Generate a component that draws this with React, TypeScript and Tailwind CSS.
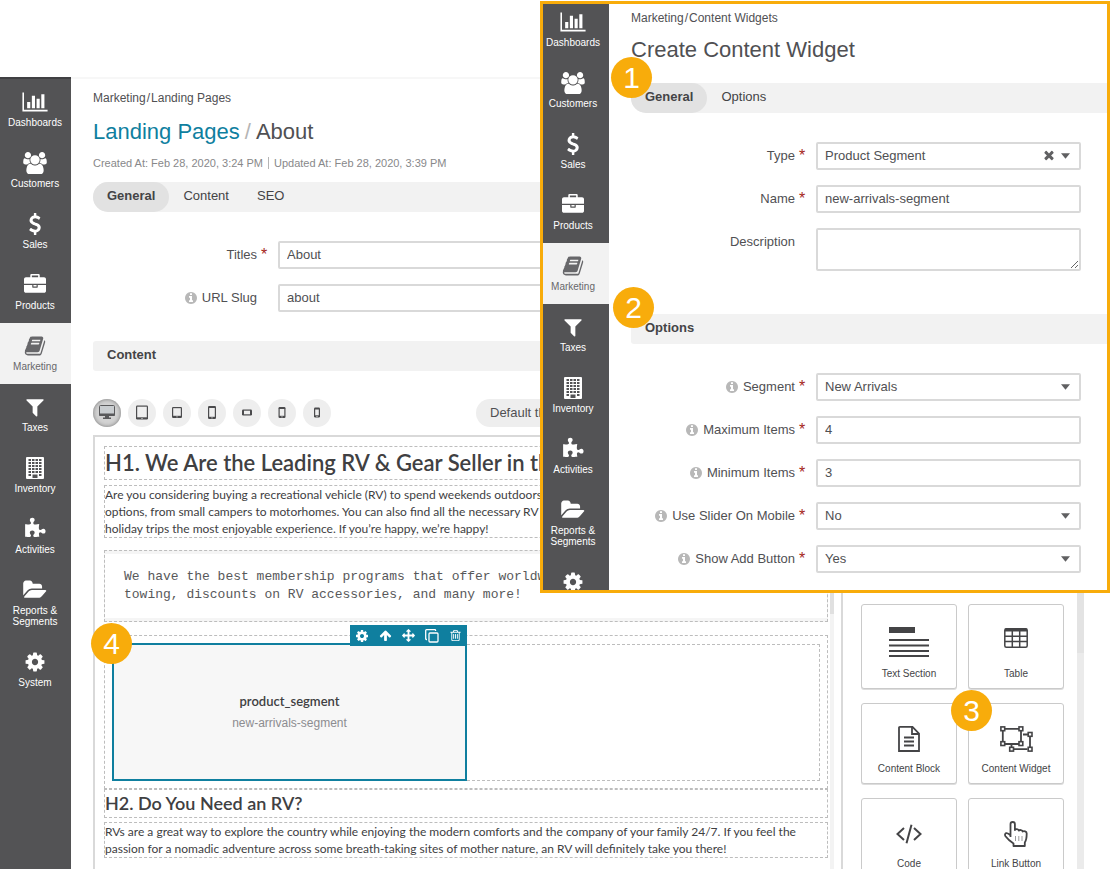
import React from "react";

type IconDef = { w: number; d: string };

const ICONS: Record<string, IconDef> = {
  chart: { w: 2048, d: "M640 896v512h-256v-512h256zm384-512v1024h-256v-1024h256zm1024 1152v128h-2048v-1536h128v1408h1920zm-640-896v768h-256v-768h256zm384-384v1152h-256v-1152h256z" },
  users: { w: 2048, d: "M657 896q-162 5-265 128h-134q-82 0-138-40.5t-56-118.5q0-353 124-353 6 0 43.5 21t97.5 42.5 119 21.5q67 0 133-23-5 37-5 66 0 139 81 256zm1071 637q0 120-73 189.5t-194 69.5h-874q-121 0-194-69.5t-73-189.5q0-53 3.5-103.5t14-109 26.5-108.5 43-97.5 62-81 85.5-53.5 111.5-20q10 0 43 21.5t73 48 107 48 135 21.5 135-21.5 107-48 73-48 43-21.5q61 0 111.5 20t85.500 53.5 62 81 43 97.5 26.500 108.5 14 109 3.500 103.5zm-1024-1277q0 106-75 181t-181 75-181-75-75-181 75-181 181-75 181 75 75 181zm704 384q0 159-112.500 271.5t-271.500 112.500-271.500-112.500-112.500-271.500 112.500-271.500 271.500-112.500 271.500 112.500 112.500 271.500zm576 225q0 78-56 118.500t-138 40.500h-134q-103-123-265-128 81-117 81-256 0-29-5-66 66 23 133 23 59 0 119-21.500t97.500-42.500 43.500-21q124 0 124 353zm-128-609q0 106-75 181t-181 75-181-75-75-181 75-181 181-75 181 75 75 181z" },
  dollar: { w: 1792, d: "M1362 1185q0 153-99.500 263.500t-258.500 136.500v175q0 14-9 23t-23 9h-135q-13 0-22.500-9.500t-9.500-22.500v-175q-66-9-127.500-31t-101.500-44.500-74-48-46.500-37.500-17.500-18q-17-21-2-41l103-135q7-10 23-12 15-2 24 9l2 2q113 99 243 125 37 8 74 8 81 0 142.500-43t61.500-122q0-28-15-53t-33.500-42-58.500-37.500-66-32-80-32.500q-39-16-61.500-25t-61.500-26.500-62.500-31-56.500-35.500-53.500-42.500-43.500-49-35.500-58-21-66.500-8.500-78q0-138 98-242t255-134v-180q0-13 9.500-22.500t22.500-9.500h135q14 0 23 9t9 23v176q57 6 110.500 23t87 33.500 63.500 37.500 39 29 15 14q17 18 5 38l-81 146q-8 15-23 16-14 3-27-7-3-3-14.500-12t-39-26.500-58.500-32-74.500-26-85.500-11.500q-95 0-155 43t-60 111q0 26 8.500 48t29.500 41.500 39.500 33 56 31 60.500 27 70 27.500q53 20 81 31.500t76 35 75.500 42.500 62 50 53 63.500 31.500 76.500 13 94z" },
  briefcase: { w: 1792, d: "M640 256h512v-128h-512v128zm1152 640v480q0 66-47 113t-113 47h-1472q-66 0-113-47t-47-113v-480h672v160q0 26 19 45t45 19h320q26 0 45-19t19-45v-160h672zm-768 0v128h-256v-128h256zm768-480v384h-1792v-384q0-66 47-113t113-47h352v-160q0-40 28-68t68-28h576q40 0 68 28t28 68v160h352q66 0 113 47t47 113z" },
  book: { w: 1792, d: "M1703 478q40 57 18 129l-275 906q-19 64-76.500 107.500t-122.500 43.500h-923q-77 0-148.500-53.500t-99.500-131.500q-24-67-2-127 0-4 3-27t4-37q1-8-3-21.500t-3-19.500q2-11 8-21t16.500-23.500 16.500-23.500q23-38 45-91.500t30-91.500q3-10 .5-30t-.5-28q3-11 17-28t17-23q21-36 42-92t25-90q1-9-2.500-32t.5-28q4-13 22-30.500t22-22.500q19-26 42.500-84.500t27.500-96.500q1-8-3-25.500t-2-26.500q2-8 9-18t18-23 17-21q8-12 16.500-30.500t15-35 16-36 19.500-32 26.500-23.500 36-11.500 47.500 5.500l-1 3q38-9 51-9h761q74 0 114 56t18 130l-274 906q-36 119-71.500 153.500t-128.500 34.500h-869q-27 0-38 15-11 16-1 43 24 70 144 70h923q29 0 56-15.500t35-41.500l300-987q7-22 5-57 38 15 59 43zm-1064 2q-4 13 2 22.500t20 9.500h608q13 0 25.500-9.500t16.500-22.500l21-64q4-13-2-22.500t-20-9.500h-608q-13 0-25.500 9.500t-16.500 22.500zm-83 256q-4 13 2 22.500t20 9.500h608q13 0 25.500-9.500t16.500-22.500l21-64q4-13-2-22.500t-20-9.500h-608q-13 0-25.500 9.500t-16.500 22.500z" },
  filter: { w: 1792, d: "M1595 295q17 41-14 70l-493 493v742q0 42-39 59-13 5-25 5-27 0-45-19l-256-256q-19-19-19-45v-486l-493-493q-31-29-14-70 17-39 59-39h1280q42 0 59 39z" },
  puzzle: { w: 1792, d: "M1755 1083q0 81-44.500 135t-123.500 54q-41 0-77.500-17.500t-59-38-56.500-38-71-17.500q-110 0-110 124 0 39 16 115t15 115v5q-22 0-33 1-34 3-97.500 11.500t-115.500 13.500-98 5q-61 0-103-26.500t-42-83.500q0-37 17.500-71t38-56.500 38-59 17.500-77.500q0-79-54-123.500t-135-44.500q-84 0-143 45.500t-59 127.500q0 43 15 83t33.500 64.500 33.500 53 15 50.500q0 45-46 89-37 35-117 35-95 0-245-24-9-2-27.500-4t-27.500-4l-13-2q-1 0-3-1-2 0-2-1v-1024q2 1 17.500 3.500t34 5 21.500 3.500q150 24 245 24 80 0 117-35 46-44 46-89 0-22-15-50.500t-33.500-53-33.500-64.500-15-83q0-82 59-127.500t144-45.500q80 0 134 44.500t54 123.500q0 41-17.500 77.500t-38 59-38 56.500-17.500 71q0 57 42 83.500t103 26.500q64 0 180-15t163-17v2q-1 2-3.500 17.500t-5 34-3.500 21.500q-24 150-24 245 0 80 35 117 44 46 89 46 22 0 50.500-15t53-33.500 64.500-33.500 83-15q82 0 127.500 59t45.500 143z" },
  folder: { w: 1792, d: "M1815 952q0 31-31 66l-336 396q-43 51-120.500 86.500t-143.500 35.500h-1088q-34 0-60.500-13t-26.500-43q0-31 31-66l336-396q43-51 120.500-86.500t143.500-35.500h1088q34 0 60.500 13t26.500 43zm-343-344v160h-832q-94 0-197 47.500t-164 119.500l-337 396-5 6q0-4-.5-12.500t-.5-12.500v-960q0-92 66-158t158-66h320q92 0 158 66t66 158v32h544q92 0 158 66t66 158z" },
  cog: { w: 1792, d: "M1152 896q0-106-75-181t-181-75-181 75-75 181 75 181 181 75 181-75 75-181zm512-109v222q0 12-8 23t-20 13l-185 28q-19 54-39 91 35 50 107 138 10 12 10 25t-9 23q-27 37-99 108t-94 71q-12 0-26-9l-138-108q-44 23-91 38-16 136-29 186-7 28-36 28h-222q-14 0-24.500-8.500t-11.500-21.500l-28-184q-49-16-90-37l-141 107q-10 9-25 9-14 0-25-11-126-114-165-168-7-10-7-23 0-12 8-23 15-21 51-66.500t54-70.500q-27-50-41-99l-183-27q-13-2-21-12.500t-8-23.500v-222q0-12 8-23t19-13l186-28q14-46 39-92-40-57-107-138-10-12-10-24 0-10 9-23 26-36 98.500-107.500t94.500-71.500q13 0 26 10l138 107q44-23 91-38 16-136 29-186 7-28 36-28h222q14 0 24.500 8.500t11.500 21.500l28 184q49 16 90 37l142-107q9-9 24-9 13 0 25 10 129 119 165 170 7 8 7 22 0 12-8 23-15 21-51 66.500t-54 70.500q26 50 41 98l183 28q13 2 21 12.500t8 23.500z" },
  info: { w: 1792, d: "M1152 1376v-160q0-14-9-23t-23-9h-96v-512q0-14-9-23t-23-9h-320q-14 0-23 9t-9 23v160q0 14 9 23t23 9h96v320h-96q-14 0-23 9t-9 23v160q0 14 9 23t23 9h448q14 0 23-9t9-23zm-128-896v-160q0-14-9-23t-23-9h-192q-14 0-23 9t-9 23v160q0 14 9 23t23 9h192q14 0 23-9t9-23zm640 416q0 209-103 385.500t-279.500 279.500-385.500 103-385.500-103-279.500-279.500-103-385.500 103-385.500 279.500-279.500 385.500-103 385.500 103 279.500 279.500 103 385.500z" },
  times: { w: 1792, d: "M1490 1322q0 40-28 68l-136 136q-28 28-68 28t-68-28l-294-294-294 294q-28 28-68 28t-68-28l-136-136q-28-28-28-68t28-68l294-294-294-294q-28-28-28-68t28-68l136-136q28-28 68-28t68 28l294 294 294-294q28-28 68-28t68 28l136 136q28 28 28 68t-28 68l-294 294 294 294q28 28 28 68z" },
  up: { w: 1792, d: "M1675 971q0 51-37 90l-75 75q-38 38-91 38-54 0-90-38l-294-293v704q0 52-37.500 84.500t-90.500 32.500h-128q-53 0-90.500-32.500t-37.500-84.500v-704l-294 293q-36 38-90 38t-90-38l-75-75q-38-38-38-90 0-53 38-91l651-651q35-37 90-37 54 0 91 37l651 651q37 39 37 91z" },
  move: { w: 1792, d: "M1792 896q0 26-19 45l-256 256q-19 19-45 19t-45-19-19-45v-128h-384v384h128q26 0 45 19t19 45-19 45l-256 256q-19 19-45 19t-45-19l-256-256q-19-19-19-45t19-45 45-19h128v-384h-384v128q0 26-19 45t-45 19-45-19l-256-256q-19-19-19-45t19-45l256-256q19-19 45-19t45 19 19 45v128h384v-384h-128q-26 0-45-19t-19-45 19-45l256-256q19-19 45-19t45 19l256 256q19 19 19 45t-19 45-45 19h-128v384h384v-128q0-26 19-45t45-19 45 19l256 256q19 19 19 45z" },
  trash: { w: 1792, d: "M704 736v576q0 14-9 23t-23 9h-64q-14 0-23-9t-9-23v-576q0-14 9-23t23-9h64q14 0 23 9t9 23zm256 0v576q0 14-9 23t-23 9h-64q-14 0-23-9t-9-23v-576q0-14 9-23t23-9h64q14 0 23 9t9 23zm256 0v576q0 14-9 23t-23 9h-64q-14 0-23-9t-9-23v-576q0-14 9-23t23-9h64q14 0 23 9t9 23zm128 724v-948h-896v948q0 22 7 40.500t14.500 27 10.500 8.500h832q3 0 10.500-8.500t14.500-27 7-40.500zm-672-1076h448l-48-117q-7-9-17-11h-317q-10 2-17 11zm928 32v64q0 14-9 23t-23 9h-96v948q0 83-47 143.500t-113 60.500h-832q-66 0-113-58.500t-47-141.500v-952h-96q-14 0-23-9t-9-23v-64q0-14 9-23t23-9h309l70-167q15-37 54-63t79-26h320q40 0 79 26t54 63l70 167h309q14 0 23 9t9 23z" },
};

function Icon({ name, className }: { name: string; className: string }) {
  const icon = ICONS[name];
  return (
    <svg viewBox={`0 0 ${icon.w} 1792`} className={className} fill="currentColor" overflow="visible" aria-hidden="true">
      <path d={icon.d} />
    </svg>
  );
}

function BuildingIcon() {
  const cells: React.ReactNode[] = [];
  for (let r = 0; r < 6; r++) {
    for (let c = 0; c < 4; c++) {
      if (r === 5 && (c === 1 || c === 2)) continue;
      cells.push(<rect key={`${r}-${c}`} x={4.5 + c * 3.5} y={2 + r * 3} width="2.5" height="2" fill="#535355" />);
    }
  }
  return (
    <svg viewBox="0 0 22 22" className="h-[22px] w-[22px]" aria-hidden="true">
      <rect x="2" y="0" width="18" height="22" rx="1" fill="#fff" />
      {cells}
      <rect x="8.500" y="17.500" width="5" height="3.500" fill="#535355" />
    </svg>
  );
}

const NAV = [
  { label: "Dashboards", icon: "chart" },
  { label: "Customers", icon: "users" },
  { label: "Sales", icon: "dollar" },
  { label: "Products", icon: "briefcase" },
  { label: "Marketing", icon: "book", active: true },
  { label: "Taxes", icon: "filter" },
  { label: "Inventory", icon: "building" },
  { label: "Activities", icon: "puzzle" },
  { label: "Reports & Segments", icon: "folder" },
  { label: "System", icon: "cog" },
];

function Sidebar() {
  return (
    <nav className="w-[71px] shrink-0 bg-[#535355]">
      {NAV.map((n) => (
        <a
          key={n.label}
          href="#"
          className={
            n.active
              ? "flex flex-col items-center gap-1 bg-[#f2f2f2] py-3 pr-[9px] pl-2 text-center text-[10px] leading-[11px] text-[#67676a]"
              : "flex flex-col items-center gap-1 py-3 pr-[9px] pl-2 text-center text-[10px] leading-[11px] text-white"
          }
        >
          {n.icon === "building" ? (
            <BuildingIcon />
          ) : (
            <Icon name={n.icon} className={ICONS[n.icon].w === 2048 ? "h-[22px] w-[26px]" : "h-[22px] w-[22px]"} />
          )}
          <span>{n.label}</span>
        </a>
      ))}
    </nav>
  );
}

function Breadcrumb({ page }: { page: string }) {
  return (
    <div className="pt-[11px] text-[12px] leading-4 text-[#505053]">
      <a href="#">Marketing</a>
      <span className="mx-px">/</span>
      <a href="#">{page}</a>
    </div>
  );
}

function Tabs({ items }: { items: string[] }) {
  return (
    <div role="tablist" className="flex h-[30px] rounded-l-[15px] bg-[#f2f2f2] text-[13px] leading-[28px] text-[#444446]">
      {items.map((t, i) => (
        <button
          key={t}
          role="tab"
          aria-selected={i === 0}
          className={
            i === 0
              ? "flex rounded-[15px] bg-[#e2e2e2] px-[14px] font-bold"
              : "flex px-[14px]"
          }
        >
          {t}
        </button>
      ))}
    </div>
  );
}

function SectionBar({ title }: { title: string }) {
  return (
    <h2 className="h-[30px] rounded-l-[3px] bg-[#f2f2f2] pl-[14px] text-[13px] leading-[28px] font-bold text-[#444446]">
      {title}
    </h2>
  );
}

type FieldProps = {
  id: string;
  label: string;
  value?: string;
  required?: boolean;
  hint?: boolean;
  kind?: "input" | "select" | "textarea";
  clearable?: boolean;
};

function Field({ id, label, value = "", required, hint, kind = "input", clearable }: FieldProps) {
  const box =
    "block h-[28px] w-full appearance-none rounded-[2px] border-2 border-[#d9d9d9] bg-white px-[7px] text-[13px] leading-5 text-[#505053]";
  return (
    <div className="flex">
      <div className="flex w-[185px] shrink-0 justify-end">
        {hint && <Icon name="info" className="mt-[7px] mr-1 h-[14px] w-[14px] text-[#b8b8b8]" />}
        <label htmlFor={id} className="text-[13px] leading-[27px] text-[#505053]">
          {label}
        </label>
        <span className="w-[21px] pl-1 text-[16px] leading-[27px] text-[#a5281b]">{required ? "*" : ""}</span>
      </div>
      <div className="relative min-w-0 flex-1">
        {kind === "input" && <input id={id} defaultValue={value} className={`${box} pb-[2px]`} />}
        {kind === "textarea" && (
          <textarea
            id={id}
            className="block h-[43px] w-full rounded-[2px] border-2 border-[#d9d9d9] bg-white px-[7px] text-[13px] text-[#505053]"
          />
        )}
        {kind === "select" && (
          <>
            <select id={id} className={box}>
              <option>{value}</option>
            </select>
            <svg viewBox="0 0 10 6" className="pointer-events-none absolute top-[11px] right-[11px] h-[6px] w-[9px]" fill="#606062" aria-hidden="true">
              <path d="M0 0h10L5 6z" />
            </svg>
          </>
        )}
        {clearable && (
          <button aria-label="Clear" className="absolute top-[6px] right-[25px] text-[#606062]">
            <Icon name="times" className="h-[14px] w-[14px]" />
          </button>
        )}
      </div>
    </div>
  );
}

function Badge({ n, className }: { n: number; className: string }) {
  return (
    <span
      className={`absolute z-20 flex h-[41px] w-[41px] items-center justify-center rounded-full bg-[#f8ac0b] text-[30px] leading-none text-white ${className}`}
    >
      {n}
    </span>
  );
}

/* Device preview glyphs, drawn on a 20px grid */
function DeviceIcon({ kind }: { kind: string }) {
  const sizes: Record<string, [number, number]> = {
    tablet: [12, 14],
    smallTablet: [10, 11],
    phone: [8, 13],
    landscape: [10, 6],
    phoneMedium: [7, 11],
    phoneSmall: [6, 10],
  };
  if (kind === "desktop") {
    return (
      <svg viewBox="0 0 20 20" className="h-5 w-5" aria-hidden="true">
        <rect x="2.500" y="2.500" width="15" height="10" rx="1" fill="#c9cdd0" stroke="#59595b" />
        <path d="M2 10.500h16v1.500a1 1 0 0 1-1 1H3a1 1 0 0 1-1-1zM8 13h4v1.500h2V16H6v-1.500h2z" fill="#59595b" />
      </svg>
    );
  }
  const [w, h] = sizes[kind];
  const x = 10 - w / 2;
  const y = 9.5 - h / 2;
  const wide = kind === "landscape";
  const phone = kind.startsWith("phone");
  return (
    <svg viewBox="0 0 20 20" className="h-5 w-5" aria-hidden="true">
      <rect x={x} y={y} width={w} height={h} rx="1.200" fill="#4b4b4d" />
      {wide ? (
        <rect x={x + 2} y={y + 1.2} width={w - 4} height={h - 2.4} fill="#eee" />
      ) : (
        <rect x={x + 1.2} y={y + (phone ? 2 : 1.2)} width={w - 2.4} height={h - (phone ? 4.2 : 3.4)} fill="#eee" />
      )}
      {!wide && <rect x="9.400" y={y + h - 1.5} width="1.200" height="0.800" fill="#eee" />}
    </svg>
  );
}

const DEVICES = [
  ["Desktop", "desktop"],
  ["Tablet", "tablet"],
  ["Small tablet", "smallTablet"],
  ["Phone", "phone"],
  ["Phone landscape", "landscape"],
  ["Medium phone", "phoneMedium"],
  ["Small phone", "phoneSmall"],
];

function CopyIcon() {
  return (
    <svg viewBox="0 0 14 14" className="h-[14px] w-[14px]" fill="none" stroke="#fff" strokeWidth="1.300" aria-hidden="true">
      <rect x="4" y="4" width="9" height="9" rx="1" />
      <path d="M2 10.500H1.500a.8.8 0 0 1-.8-.8V1.500a.8.8 0 0 1 .8-.8h8.300a.8.8 0 0 1 .8.800V2" />
    </svg>
  );
}

function BlockIcon({ kind }: { kind: string }) {
  const s = { fill: "none", stroke: "#444446", strokeWidth: 1.8, "aria-hidden": true };
  switch (kind) {
    case "text":
      return (
        <svg viewBox="0 0 40 30" className="h-[30px] w-[40px]" fill="#444446" aria-hidden="true">
          <path d="M0 0h26v6H0zM0 12h40v2H0zM0 17.500h40v2H0zM0 23h40v2H0zM0 28h40v2H0z" />
        </svg>
      );
    case "table":
      return (
        <svg viewBox="0 0 24 20" className="mt-0.5 mb-auto h-[20px] w-[24px]" {...s} strokeWidth={1.5}>
          <rect x="0.800" y="0.800" width="22.400" height="18.400" rx="1.500" />
          <path d="M1 8.200h22M1 13.600h22M8.300 2v17M15.700 2v17" />
          <path d="M1 2h22" strokeWidth="3" />
        </svg>
      );
    case "block":
      return (
        <svg viewBox="0 0 22 26" className="h-[26px] w-[22px]" {...s}>
          <path d="M2 .9h12.500L21 7.500V25H1V2a1 1 0 0 1 1-1.100z" />
          <path d="M14 1v7h7M6 11.500h10M6 15.500h10M6 19.500h10" />
        </svg>
      );
    case "widget":
      return (
        <svg viewBox="0 0 33 26" className="h-[26px] w-[33px]" {...s}>
          <path d="M5 2.800h14M2.800 5v11M5 18h14M21 5v11M23 8.500h5M30 11v10M13.500 23.200h14M11.500 18v3" />
          <g strokeWidth="1.600">
            <rect x="0.900" y="0.900" width="3.800" height="3.800" />
            <rect x="19" y="0.900" width="3.800" height="3.800" />
            <rect x="0.900" y="15.700" width="3.800" height="3.800" />
            <rect x="19" y="15.700" width="3.800" height="3.800" />
            <rect x="28.200" y="6.500" width="3.800" height="3.800" />
            <rect x="9.700" y="21.300" width="3.800" height="3.800" />
            <rect x="28.200" y="21.300" width="3.800" height="3.800" />
          </g>
        </svg>
      );
    case "code":
      return (
        <svg viewBox="0 0 26 20" className="h-[20px] w-[26px]" {...s} strokeWidth={2}>
          <path d="M8 4L1.500 10 8 16M18 4l6.500 6-6.500 6M15.500.8l-5 18.400" />
        </svg>
      );
    default:
      return (
        <svg viewBox="0 0 24 26" className="h-[26px] w-[24px]" {...s} strokeLinejoin="round">
          <path d="M6.500 16V3.200a2.200 2.200 0 0 1 4.400 0V9c.6-1.200 3.600-1.100 3.900.6.700-.9 3.600-.8 3.900.9 1.200-.7 4-.3 4 1.900 0 4.500-.2 6.500-1.900 9.100V25H9.500v-2.500C6.500 20.500 4 18.500 1.500 15.200c-.9-1.300-.5-2.600.6-3 1.700-.5 3 .8 4.400 2.300" />
          <path d="M11.500 15v5M14.800 15v5M18 15v5" strokeWidth="1" stroke="#9a9a9c" />
        </svg>
      );
  }
}

function BlockCard({ label, kind, tall }: { label: string; kind: string; tall?: boolean }) {
  return (
    <button className="flex flex-col items-center gap-[10px] rounded-[3px] border border-[#cacaca] bg-white pt-[21px] pb-2 text-[10px] leading-3 text-[#444446] shadow-[0_1px_0_#ddd]">
      <span className={tall ? "flex h-[32px] items-center" : "flex h-[28px] items-center"}>
        <BlockIcon kind={kind} />
      </span>
      {label}
    </button>
  );
}

function LandingPage() {
  const dashed = "border border-dashed border-[#bdbdbd]";
  return (
    <main className="flex min-h-0 min-w-0 flex-1 flex-col overflow-hidden pl-[22px]">
      <Breadcrumb page="Landing Pages" />
      <h1 className="mt-3 text-[22px] leading-7 text-[#505053]">
        <a href="#" className="text-[#0f7f9f]">Landing Pages</a>
        <span className="mx-[5px] text-[#b5b5b5]">/</span>
        About
      </h1>
      <div className="mt-[9px] flex items-center text-[11px] leading-4 text-[#88888a]">
        <span className="mr-[5px] border-r border-[#b5b5b5] pr-[5px] leading-3">Created At: Feb 28, 2020, 3:24 PM</span>
        <span>Updated At: Feb 28, 2020, 3:39 PM</span>
      </div>
      <div className="mt-[11px]">
        <Tabs items={["General", "Content", "SEO"]} />
      </div>
      <div className="my-[29px] flex flex-col gap-[15px] pr-[26px]">
        <Field id="titles" label="Titles" value="About" required />
        <Field id="slug" label="URL Slug" value="about" hint />
      </div>
      <SectionBar title="Content" />
      <div className="mt-7 flex gap-[7px]">
        {DEVICES.map(([label, kind], i) => (
          <button
            key={kind}
            aria-label={label}
            className={
              i === 0
                ? "flex h-7 w-7 items-center justify-center rounded-full bg-[#d3d3d3] shadow-[inset_0_0_4px_#777]"
                : "flex h-7 w-7 items-center justify-center rounded-full bg-[#eeeeee]"
            }
          >
            <DeviceIcon kind={kind} />
          </button>
        ))}
        <button className="ml-[138px] h-7 rounded-full bg-[#eeeeee] px-[14px] text-[13px] leading-7 text-[#505053]">
          Default theme
        </button>
      </div>
      <div className="mt-2 flex min-h-0 flex-1 border-t-2 border-l-2 border-[#d9d9d9]">
        <div className="flex min-w-0 flex-1 overflow-hidden border-r-2 border-[#d9d9d9] font-['Lato',sans-serif] text-[13px] leading-[17px] text-[#404042]">
          <div className="min-w-0 flex-1 pt-[9px] pl-[9px]">
            <h1 className={`${dashed} h-[34px] overflow-hidden text-[22px] leading-8 font-semibold whitespace-nowrap`}>
              H1. We Are the Leading RV &amp; Gear Seller in the
            </h1>
            <p className={`${dashed} mt-[5px] overflow-hidden text-[12px] leading-[17px] whitespace-nowrap`}>
              Are you considering buying a recreational vehicle (RV) to spend weekends outdoors
              <br />
              options, from small campers to motorhomes. You can also find all the necessary RV
              <br />
              holiday trips the most enjoyable experience. If you’re happy, we’re happy!
            </p>
            <div className={`${dashed} mt-3 bg-[#f5f5f5] py-[3px]`}>
              <pre className="overflow-hidden bg-white px-[19px] py-[14px] font-['Liberation_Mono',monospace] text-[13px] leading-[18px] text-[#58585a]">
                {"We have the best membership programs that offer worldwide\ntowing, discounts on RV accessories, and many more!"}
              </pre>
            </div>
            <div className={`${dashed} mt-[13px] flex px-[7px] py-[7px]`}>
              <div className="relative flex h-[138px] w-[calc(50%+1px)] shrink-0 bg-[#f7f7f7] outline-2 -outline-offset-2 outline-[#0f7f9f]">
                <div className="m-px flex flex-1 flex-col items-center justify-center gap-[5px] border border-dashed border-[#9fb9c2]">
                  <span className="font-semibold">product_segment</span>
                  <span className="font-['Liberation_Sans',sans-serif] text-[12px] text-[#8c8c90]">new-arrivals-segment</span>
                </div>
                <div className="absolute -top-[18px] right-0 z-10 flex h-[21px] items-center gap-[10px] bg-[#0f7f9f] px-[5px] text-white">
                  <button aria-label="Settings"><Icon name="cog" className="h-[14px] w-[14px]" /></button>
                  <button aria-label="Select parent"><Icon name="up" className="h-[13px] w-[13px]" /></button>
                  <button aria-label="Move"><Icon name="move" className="h-[13px] w-[13px]" /></button>
                  <button aria-label="Copy"><CopyIcon /></button>
                  <button aria-label="Delete"><Icon name="trash" className="h-[13px] w-[13px]" /></button>
                </div>
              </div>
              <div className={`${dashed} mt-px flex-1 border-l-0`} />
            </div>
            <h2 className={`${dashed} h-[29px] overflow-hidden text-[18px] leading-[26px] font-semibold`}>
              H2. Do You Need an RV?
            </h2>
            <p className={`${dashed} mt-[4px] overflow-hidden text-[12px] leading-[17px] whitespace-nowrap`}>
              RVs are a great way to explore the country while enjoying the modern comforts and the company of your family 24/7. If you feel the
              <br />
              passion for a nomadic adventure across some breath-taking sites of mother nature, an RV will definitely take you there!
            </p>
          </div>
          <div className="mr-[7px] ml-0.5 w-1 bg-[#f3f3f3]">
            <div className="h-[177px] bg-[#e0e0e0]" />
          </div>
        </div>
        <div className="flex w-[267px] shrink-0 overflow-hidden">
          <div className="grid flex-1 grid-cols-[96px_96px] content-start gap-x-[11px] gap-y-[14px] pt-[167px] pl-[18px]">
            <BlockCard label="Text Section" kind="text" tall />
            <BlockCard label="Table" kind="table" tall />
            <BlockCard label="Content Block" kind="block" />
            <BlockCard label="Content Widget" kind="widget" />
            <BlockCard label="Code" kind="code" />
            <BlockCard label="Link Button" kind="link" />
          </div>
          <div className="mr-[26px] w-[7px] bg-[#ebebeb]">
            <div className="h-[216px] bg-[#e3e3e3]" />
          </div>
        </div>
      </div>
    </main>
  );
}

function WidgetWindow() {
  return (
    <section className="absolute top-px right-0 z-10 h-[592px] w-[570px] overflow-hidden border-3 border-[#f8ac0b] bg-white">
      <div className="-mt-[5px] -ml-[5px] flex">
        <Sidebar />
        <div className="min-w-0 flex-1 pl-[22px]">
          <Breadcrumb page="Content Widgets" />
          <h1 className="mt-[10px] mb-[19px] text-[22px] leading-7 text-[#505053]">Create Content Widget</h1>
          <Tabs items={["General", "Options"]} />
          <div className="mt-[29px] mb-[43px] flex flex-col gap-[15px] pr-[26px]">
            <Field id="type" label="Type" value="Product Segment" required kind="select" clearable />
            <Field id="name" label="Name" value="new-arrivals-segment" required />
            <Field id="description" label="Description" kind="textarea" />
          </div>
          <SectionBar title="Options" />
          <div className="mt-[29px] flex flex-col gap-[15px] pr-[26px]">
            <Field id="segment" label="Segment" value="New Arrivals" required hint kind="select" />
            <Field id="max" label="Maximum Items" value="4" required hint />
            <Field id="min" label="Minimum Items" value="3" required hint />
            <Field id="slider" label="Use Slider On Mobile" value="No" required hint kind="select" />
            <Field id="add" label="Show Add Button" value="Yes" required hint kind="select" />
          </div>
        </div>
      </div>
    </section>
  );
}

export default function App() {
  return (
    <div className="relative flex h-screen flex-col overflow-hidden bg-white font-['Liberation_Sans',Arial,sans-serif]">
      <header className="flex h-[79px] shrink-0 items-end">
        <div className="h-0.5 w-[71px] bg-[#404043]" />
        <div className="h-0.5 flex-1 bg-[#f7f7f7]" />
      </header>
      <div className="flex min-h-0 flex-1">
        <Sidebar />
        <LandingPage />
      </div>
      <WidgetWindow />
      <Badge n={1} className="top-[57px] right-[458px]" />
      <Badge n={2} className="top-[287px] right-[456px]" />
      <Badge n={3} className="top-[690px] right-[118px]" />
      <Badge n={4} className="top-[623px] left-[91px]" />
    </div>
  );
}
